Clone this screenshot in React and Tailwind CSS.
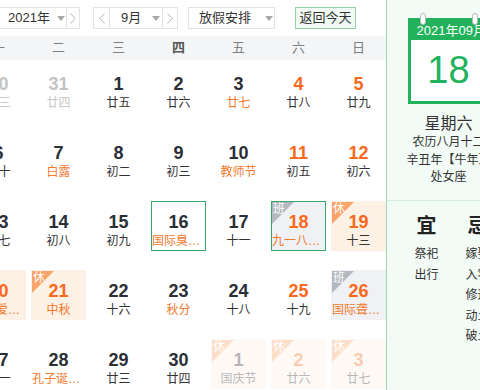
import React from 'react'

const FONT = { fontFamily: '"Liberation Sans", "Noto Sans CJK SC", sans-serif' }

const weekdays = ['一', '二', '三', '四', '五', '六', '日']

const cells = [
  { d: '30', l: '廿三', dim: true },
  { d: '31', l: '廿四', dim: true },
  { d: '1', l: '廿五' },
  { d: '2', l: '廿六' },
  { d: '3', l: '廿七', fest: true },
  { d: '4', l: '廿八', red: true },
  { d: '5', l: '廿九', red: true },
  { d: '6', l: '三十' },
  { d: '7', l: '白露', fest: true },
  { d: '8', l: '初二' },
  { d: '9', l: '初三' },
  { d: '10', l: '教师节', fest: true },
  { d: '11', l: '初五', red: true },
  { d: '12', l: '初六', red: true },
  { d: '13', l: '初七' },
  { d: '14', l: '初八' },
  { d: '15', l: '初九' },
  { d: '16', l: '国际臭氧层保护日', fest: true, hover: true },
  { d: '17', l: '十一' },
  { d: '18', l: '九一八事变纪念日', fest: true, red: true, tag: '班', hover: true },
  { d: '19', l: '十三', red: true, tag: '休' },
  { d: '20', l: '全国爱牙日', fest: true, red: true, tag: '休' },
  { d: '21', l: '中秋', fest: true, red: true, tag: '休' },
  { d: '22', l: '十六' },
  { d: '23', l: '秋分', fest: true },
  { d: '24', l: '十八' },
  { d: '25', l: '十九', red: true },
  { d: '26', l: '国际聋人节', fest: true, red: true, tag: '班' },
  { d: '27', l: '廿一' },
  { d: '28', l: '孔子诞辰纪念日', fest: true },
  { d: '29', l: '廿三' },
  { d: '30', l: '廿四' },
  { d: '1', l: '国庆节', tag: '休', faded: true },
  { d: '2', l: '廿六', red: true, tag: '休', faded: true },
  { d: '3', l: '廿七', red: true, tag: '休', faded: true },
]

const Caret = () => (
  <svg width="8" height="5" viewBox="0 0 8 5">
    <path d="M0 0 L8 0 L4 5 Z" fill="#a8a8a8" />
  </svg>
)

const Chevron = ({ left }) => (
  <svg width="6" height="11" viewBox="0 0 6 11">
    <path d={left ? 'M5.5 0.5 L0.8 5.5 L5.5 10.5' : 'M0.5 0.5 L5.2 5.5 L0.5 10.5'} fill="none" stroke="#b5b5b5" strokeWidth="1" />
  </svg>
)

function DayCell({ c }) {
  let bg = ''
  if (c.tag === '休') bg = 'bg-[#fdf0e4]'
  if (c.tag === '班') bg = 'bg-[#eff1f5]'
  const numColor = c.dim ? 'text-[#c4c4c4]' : c.red ? 'text-[#f8691c]' : 'text-[#2b2f36]'
  const lunarColor = c.dim ? 'text-[#c8c8c8]' : c.fest ? 'text-[#f2792c]' : 'text-[#333]'
  return (
    <div
      className={`relative h-[50px] ${bg} ${c.hover ? 'border border-[#3aa66a]' : 'border border-transparent'} ${c.faded ? 'opacity-35' : ''}`}
    >
      {c.tag && (
        <div
          className={`absolute left-0 top-0 w-[22px] h-[22px] ${c.tag === '休' ? 'bg-[#f8a46a]' : 'bg-[#b4b8c0]'} [clip-path:polygon(0_0,100%_0,0_100%)]`}
        >
          <span className="absolute left-[1px] top-[-1px] text-[12px] leading-[16px] text-white">{c.tag}</span>
        </div>
      )}
      <div className={`pt-[9px] text-center text-[18px] leading-[22px] font-bold ${numColor}`}>{c.d}</div>
      <div className={`text-center text-[12px] leading-[16px] truncate ${lunarColor}`}>{c.l}</div>
    </div>
  )
}

export default function App() {
  return (
    <div className="w-[480px] h-[390px] overflow-hidden bg-white flex" style={FONT}>
      {/* calendar */}
      <div className="ml-[-29px] w-[415px] shrink-0 flex flex-col">
        <div className="flex items-center h-[22px] mt-[7px] ml-[21px] text-[13px] text-[#333]">
          <div className="flex h-[22px] w-[88px] border border-[#e2e2e2]">
            <div className="flex items-center w-[73px] pl-[15px] gap-[7px]">
              <span>2021年</span>
              <Caret />
            </div>
            <div className="flex items-center justify-center flex-1 border-l border-[#e2e2e2]">
              <Chevron />
            </div>
          </div>
          <div className="flex h-[22px] w-[85px] ml-[13px] border border-[#e2e2e2]">
            <div className="flex items-center justify-center w-[15px]">
              <Chevron left />
            </div>
            <div className="flex items-center w-[54px] border-x border-[#e2e2e2] pl-[11px] gap-[11px]">
              <span>9月</span>
              <Caret />
            </div>
            <div className="flex items-center justify-center flex-1">
              <Chevron />
            </div>
          </div>
          <div className="flex items-center h-[22px] w-[87px] ml-[10px] border border-[#e2e2e2] pl-[10px] gap-[14px]">
            <span>放假安排</span>
            <Caret />
          </div>
          <div className="flex items-center justify-center h-[22px] w-[61px] ml-[20px] border border-[#8fd3a6] bg-[#f1fbf4]">
            返回今天
          </div>
        </div>

        <div className="grid grid-cols-7 gap-x-[5px] h-[24px] mt-[7px] bg-[#f4f5f7] items-center text-[13px] text-[#808080]">
          {weekdays.map((w) => (
            <div key={w} className={`text-center ${w === '四' ? 'text-[#555] font-semibold' : ''}`}>{w}</div>
          ))}
        </div>

        <div className="grid grid-cols-7 gap-x-[5px] gap-y-[19px] mt-[3px]">
          {cells.map((c, i) => (
            <DayCell key={i} c={c} />
          ))}
        </div>
      </div>

      {/* side panel */}
      <div className="w-[124px] shrink-0 border-l border-[#9ddcb2] bg-[#f2fbf6] flex flex-col items-center text-[#333]">
        <div className="relative mt-[18px] w-[82px]">
          <div className="absolute left-[12px] top-[-5px] w-[6px] h-[12px] rounded-full bg-white border border-[#b8b8b8]" />
          <div className="absolute right-[12px] top-[-5px] w-[6px] h-[12px] rounded-full bg-white border border-[#b8b8b8]" />
          <div className="h-[22px] bg-[#22b25c] text-white text-[13px] leading-[20px] pt-[3px] pl-[9px] whitespace-nowrap">2021年09月</div>
          <div className="h-[64px] bg-white border-[3px] border-t-0 border-[#22b25c] flex items-center justify-center text-[38px] text-[#22b25c]">
            18
          </div>
        </div>
        <div className="mt-[10px] text-[16px] leading-[20px]">星期六</div>
        <div className="text-[12px] leading-[17px] whitespace-nowrap">农历八月十二</div>
        <div className="mt-[1px] text-[12px] leading-[17px] whitespace-nowrap">辛丑年【牛年】</div>
        <div className="text-[12px] leading-[17px]">处女座</div>
        <div className="mt-[14px] w-full h-px bg-[#d8efdf]" />
        <div className="w-full flex pl-[14px] mt-[13px]">
          <div className="w-[51px] flex flex-col items-center">
            <div className="text-[20px] leading-[24px] font-bold text-[#222]">宜</div>
            <div className="mt-[6px] text-[12px] leading-[20.5px] text-center">
              <div>祭祀</div>
              <div>出行</div>
            </div>
          </div>
          <div className="w-[51px] flex flex-col items-center">
            <div className="text-[20px] leading-[24px] font-bold text-[#222]">忌</div>
            <div className="mt-[6px] text-[12px] leading-[20.5px] text-center">
              <div>嫁娶</div>
              <div>入宅</div>
              <div>修造</div>
              <div>动土</div>
              <div>破土</div>
            </div>
          </div>
        </div>
      </div>
    </div>
  )
}
